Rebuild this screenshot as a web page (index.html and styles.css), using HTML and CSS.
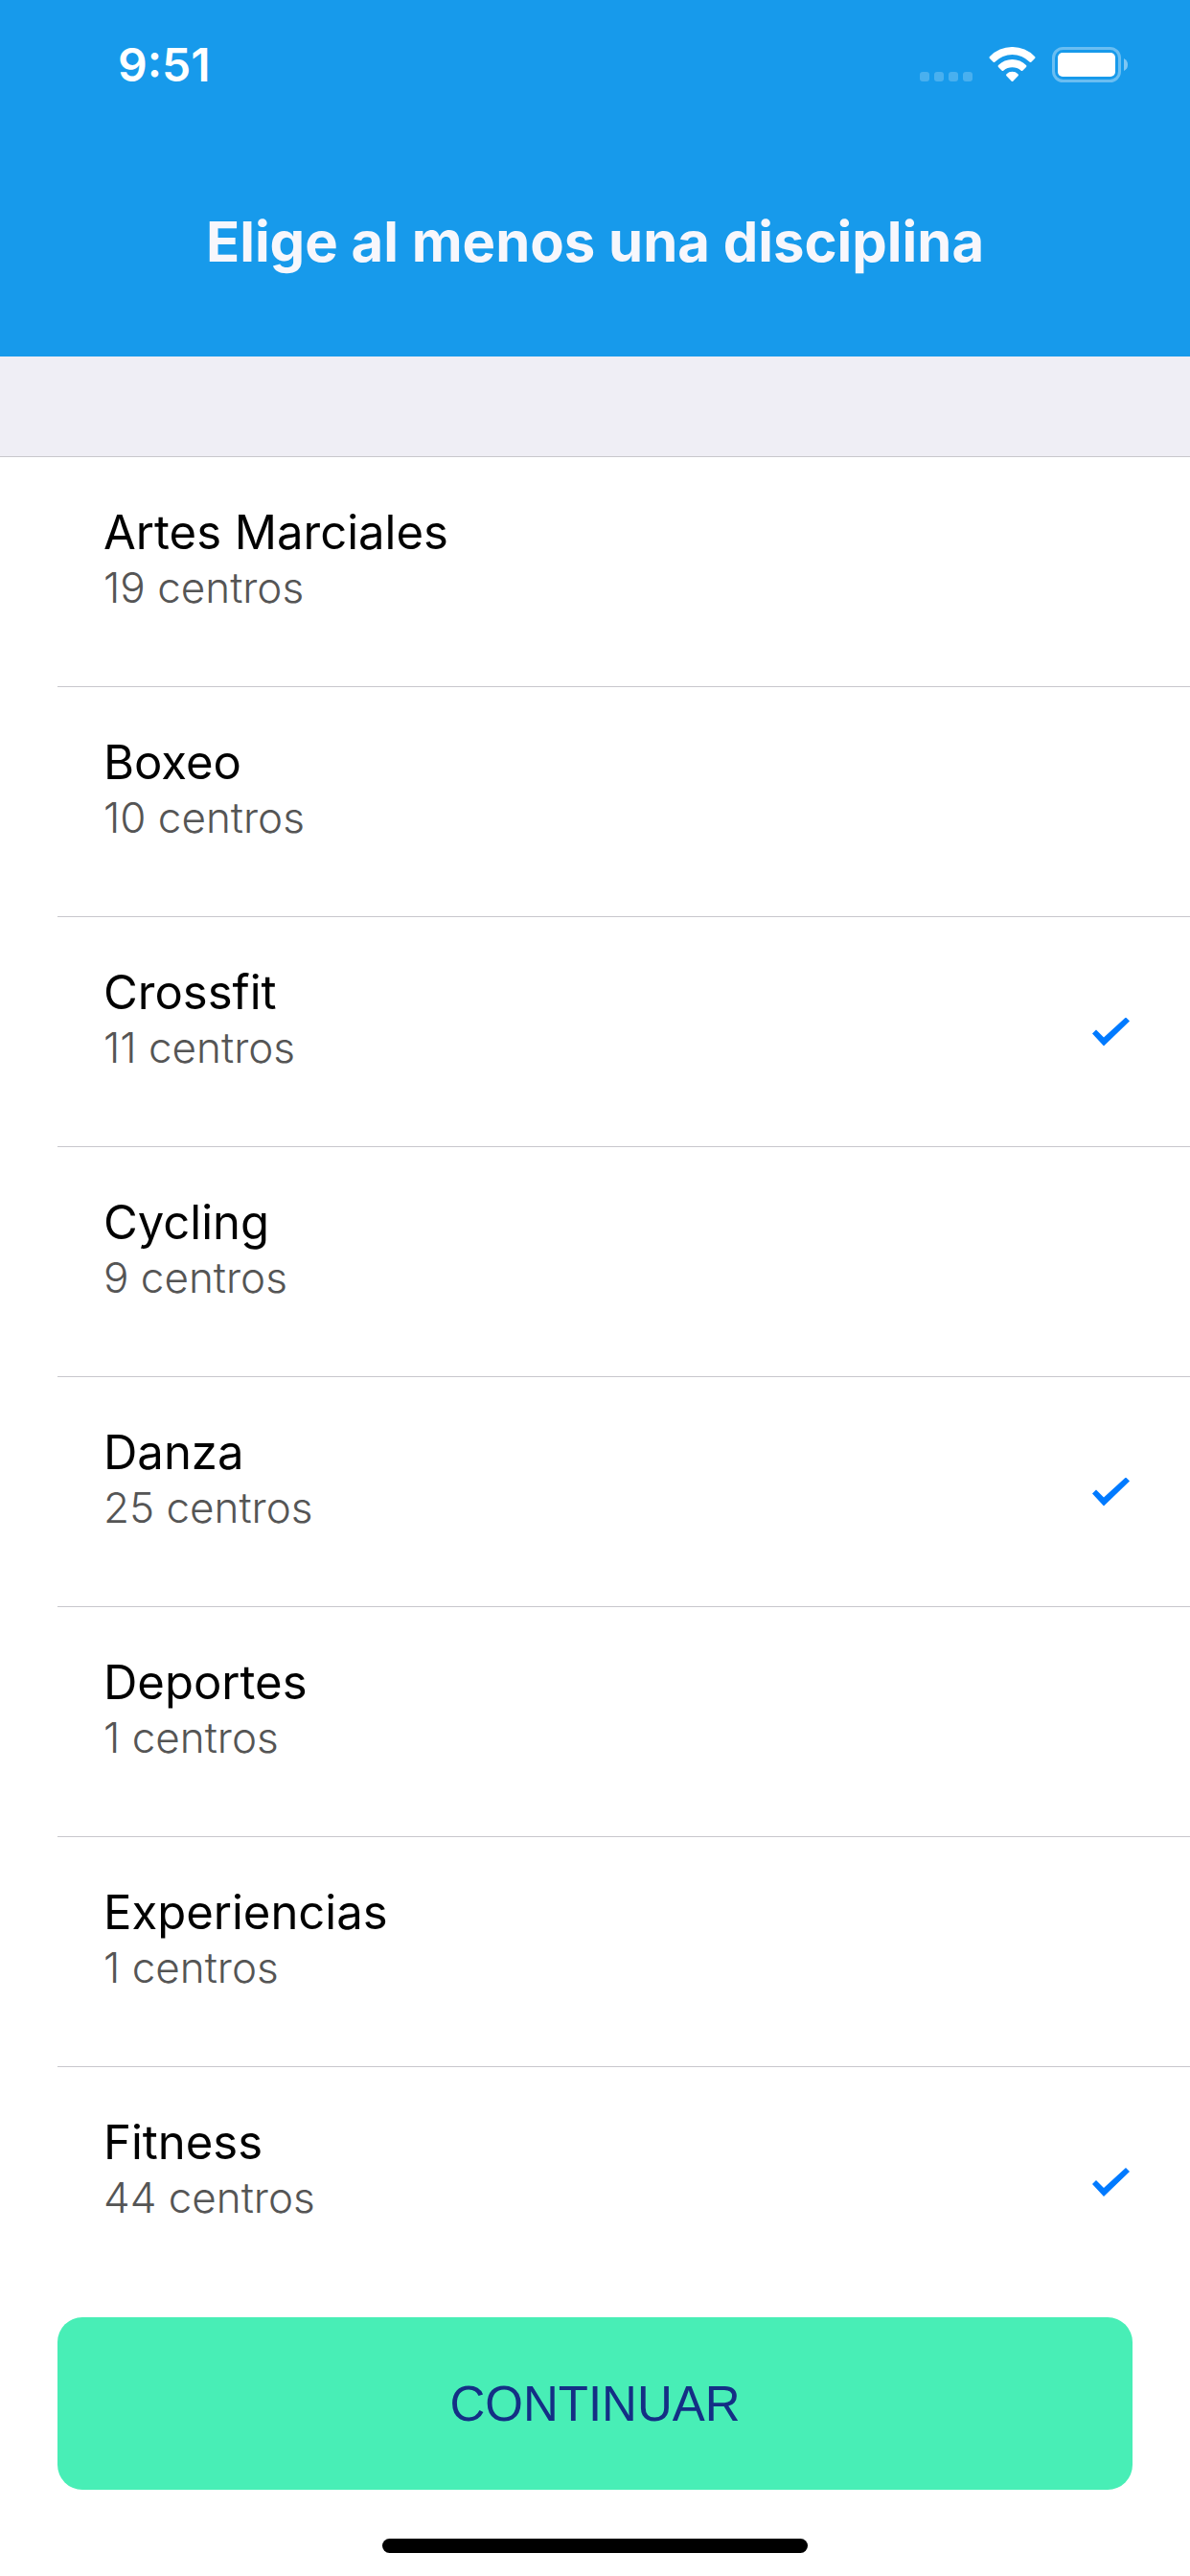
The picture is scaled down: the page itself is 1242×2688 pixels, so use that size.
FILE: index.html
```
<!DOCTYPE html>
<html lang="es">

<head>
    <meta charset="UTF-8">
    <meta name="viewport" content="width=device-width, initial-scale=1.0">
    <title>Elige al menos una disciplina</title>
    <link rel="stylesheet" href="styles.css">
</head>

<body>
    <header class="header">
        <div class="status-bar">
            <span class="time">9:51</span>
            <div class="status-icons">
                <svg width="55" height="37" viewBox="0 0 55 37" fill="#fff" fill-opacity="0.22">
                    <rect x="0" y="26" width="10" height="10" rx="3" />
                    <rect x="15" y="26" width="10" height="10" rx="3" />
                    <rect x="30" y="26" width="10" height="10" rx="3" />
                    <rect x="45" y="26" width="10" height="10" rx="3" />
                </svg>
                <svg width="49" height="37" viewBox="0 0 49 37" fill="#fff">
                    <path d="M1 10A32.6 32.6 0 0 1 48 10q1 1 0 2l-3.5 3.6q-1 1-2 0A25.1 25.1 0 0 0 6.5 15.6q-1 1-2 0L1 12q-1-1 0-2z" />
                    <path d="M10 19A20.5 20.5 0 0 1 39 19q1 1 0 2l-3.5 3.6q-1 1-2 0A14 14 0 0 0 15.5 24.6q-1 1-2 0L10 21q-1-1 0-2z" />
                    <path d="M18.5 28.2A8.5 8.5 0 0 1 30.5 28.2q1 1 0 2l-5 5.3q-1 1-2 0l-5-5.3q-1-1 0-2z" />
                </svg>
                <svg width="79" height="37" viewBox="0 0 79 37" fill="#fff">
                    <rect x="1.5" y="1.5" width="69" height="34" rx="10" fill="none" stroke="#fff" stroke-width="3" stroke-opacity="0.36" />
                    <rect x="6" y="6" width="60" height="25" rx="5" />
                    <path d="M75 12q4 2 4 6.5t-4 6.5z" fill-opacity="0.45" />
                </svg>
            </div>
        </div>
        <h1 class="title">Elige al menos una disciplina</h1>
    </header>

    <main>
        <div class="section-gap"></div>
        <ul class="list">
            <li>
                <label class="row">
                    <span class="info">
                        <span class="name">Artes Marciales</span>
                        <span class="count">19 centros</span>
                    </span>
                    <input type="checkbox" class="check">
                </label>
            </li>
            <li>
                <label class="row">
                    <span class="info">
                        <span class="name">Boxeo</span>
                        <span class="count">10 centros</span>
                    </span>
                    <input type="checkbox" class="check">
                </label>
            </li>
            <li>
                <label class="row">
                    <span class="info">
                        <span class="name">Crossfit</span>
                        <span class="count">11 centros</span>
                    </span>
                    <input type="checkbox" class="check" checked>
                </label>
            </li>
            <li>
                <label class="row">
                    <span class="info">
                        <span class="name">Cycling</span>
                        <span class="count">9 centros</span>
                    </span>
                    <input type="checkbox" class="check">
                </label>
            </li>
            <li>
                <label class="row">
                    <span class="info">
                        <span class="name">Danza</span>
                        <span class="count">25 centros</span>
                    </span>
                    <input type="checkbox" class="check" checked>
                </label>
            </li>
            <li>
                <label class="row">
                    <span class="info">
                        <span class="name">Deportes</span>
                        <span class="count">1 centros</span>
                    </span>
                    <input type="checkbox" class="check">
                </label>
            </li>
            <li>
                <label class="row">
                    <span class="info">
                        <span class="name">Experiencias</span>
                        <span class="count">1 centros</span>
                    </span>
                    <input type="checkbox" class="check">
                </label>
            </li>
            <li>
                <label class="row">
                    <span class="info">
                        <span class="name">Fitness</span>
                        <span class="count">44 centros</span>
                    </span>
                    <input type="checkbox" class="check" checked>
                </label>
            </li>
        </ul>
    </main>

    <footer class="footer">
        <button type="button" class="continue">CONTINUAR</button>
        <div class="home-bar"></div>
    </footer>
</body>

</html>
```
FILE: styles.css
```
* {
    box-sizing: border-box;
}

body {
    margin: 0;
    min-height: 100vh;
    display: flex;
    flex-direction: column;
    background-color: #fff;
    font-family: Inter, "Liberation Sans", sans-serif;
}

.header {
    background-color: #179aeb;
    color: #f7f7fc;
}

.status-bar {
    display: flex;
    justify-content: space-between;
    align-items: center;
    height: 132px;
    padding: 3px 65px 0 123px;
}

.time {
    font-size: 48px;
    font-weight: 600;
    color: #fff;
}

.status-icons {
    display: flex;
    gap: 17px;
}

.title {
    margin: 0;
    padding: 84px 20px;
    font-size: 58px;
    font-weight: 700;
    line-height: 72px;
    text-align: center;
}

.section-gap {
    height: 105px;
    background-color: #efeef5;
    border-bottom: 1px solid #c8c7cc;
}

.list {
    margin: 0;
    padding: 0 0 0 60px;
    list-style: none;
}

.row {
    display: flex;
    justify-content: space-between;
    align-items: center;
    height: 240px;
    padding: 0 63px 0 48px;
    border-bottom: 1px solid #c8c7cc;
    cursor: pointer;
}

/* the last row runs straight into the footer */
.list li:last-child .row {
    border-bottom: none;
}

.info {
    display: flex;
    flex-direction: column;
    padding-bottom: 28px;
}

.name {
    font-size: 49px;
    line-height: 60px;
    color: #000;
}

.count {
    font-size: 44px;
    font-weight: 300;
    line-height: 54px;
    color: #555;
}

.check {
    appearance: none;
    width: 39px;
    height: 30px;
    margin: 0;
    clip-path: polygon(0 17px, 4px 13px, 12px 21px, 35px 0, 39px 4px, 12px 30px);
}

.check:checked {
    background-color: #007aff;
}

.footer {
    display: flex;
    flex-direction: column;
    align-items: center;
    margin-top: auto;
    padding: 20px 60px 24px;
}

.continue {
    width: 100%;
    height: 180px;
    border: none;
    border-radius: 26px;
    background-color: #48eeb6;
    color: #142f85;
    font-family: "Liberation Sans", Arial, sans-serif;
    font-size: 51px;
    cursor: pointer;
}

.home-bar {
    width: 444px;
    height: 15px;
    margin-top: 51px;
    border-radius: 8px;
    background-color: #000;
}
```
